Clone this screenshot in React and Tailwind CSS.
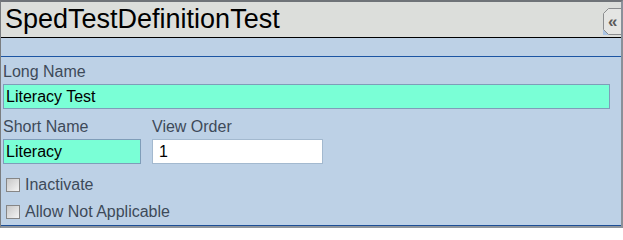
function Field({ label, value, className, inputClass }) {
  return (
    <div className={className}>
      <div className="h-[18px] leading-[18px] text-[16px] text-[#3d4a59]">{label}</div>
      <div className={`mt-[3px] h-[25px] border border-[#7f9db9] flex items-center pl-[2px] text-[16px] text-black ${inputClass}`}>
        {value}
      </div>
    </div>
  );
}

function Check({ label }) {
  return (
    <div className="h-[27px] flex items-center gap-[5px] pl-[3px]">
      <span className="shrink-0 w-[14px] h-[14px] border border-[#868686] bg-gradient-to-br from-[#c8c8c8] to-[#f4f4f4]" />
      <span className="text-[16px] text-[#3d4a59]">{label}</span>
    </div>
  );
}

export default function App() {
  return (
    <div className="w-[623px] h-[228px] overflow-hidden bg-[#bdd1e6] border-t-2 border-l border-r-2 border-b-2 border-t-[#6f7378] border-l-[#7a7d80] border-r-[#8a9099] border-b-[#8f959c] flex flex-col font-['Liberation_Sans',Arial,sans-serif]">
      {/* header */}
      <div className="relative h-[36px] shrink-0 bg-[#dcdedb] border-b border-black flex items-center pl-[4px]">
        <span className="text-[27px] leading-none text-black">SpedTestDefinitionTest</span>
        <svg className="absolute left-[602px] top-[6px]" width="20" height="27" viewBox="0 0 20 27">
          <polygon points="0,21 0,27 6,27" fill="#a9c4e4" />
          <polygon points="5.5,0.5 20,0.5 20,26.5 5.5,26.5 0.5,21.5 0.5,5.5" fill="#e4e5e3" stroke="#8b8d8f" />
          <text x="5" y="19" fontSize="17" fontWeight="bold" fill="#5a5a5a" fontFamily="Liberation Sans, Arial, sans-serif">«</text>
        </svg>
      </div>

      <div className="h-[18px] shrink-0" />
      <div className="h-[1px] shrink-0 bg-[#1c55a3]" />

      {/* form */}
      <div className="flex-1 px-[2px] pt-[6px]">
        <Field label="Long Name" value="Literacy Test" inputClass="w-[607px] bg-[#7affd6]" />
        <div className="mt-[9px] flex gap-[11px]">
          <Field label="Short Name" value="Literacy" inputClass="w-[138px] bg-[#7affd6]" />
          <Field label="View Order" value="1" inputClass="w-[171px] bg-white pl-[6px] -mt-[1px] border-[#a3b9cf]" />
        </div>
        <div className="mt-[7px]">
          <Check label="Inactivate" />
          <Check label="Allow Not Applicable" />
        </div>
      </div>
      <div className="h-[2px] shrink-0 bg-[#1c4e96]" />
    </div>
  );
}
